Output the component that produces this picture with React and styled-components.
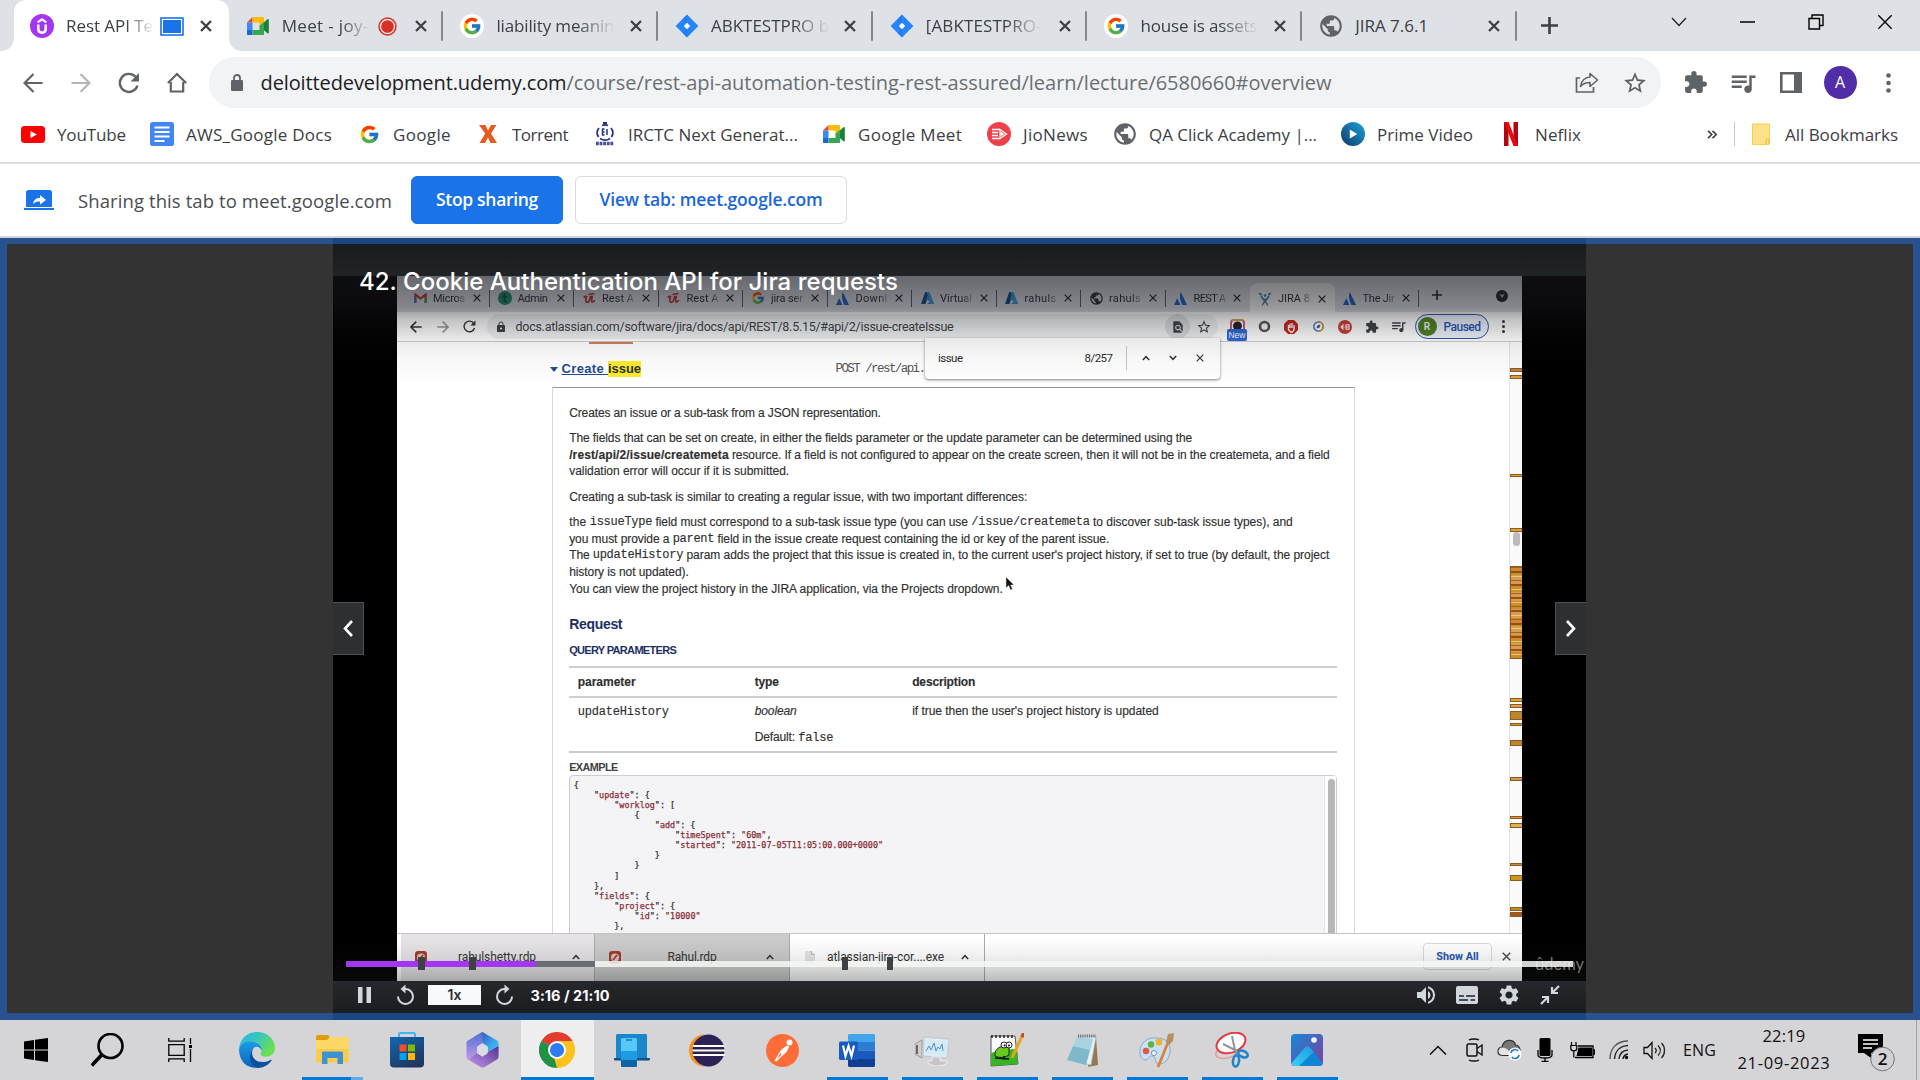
import React, { useLayoutEffect, useRef, useState } from "react";
import styled, { createGlobalStyle, css } from "styled-components";
import { FcGoogle } from "react-icons/fc";
import {
  MdPublic, MdExtension, MdQueueMusic, MdStarBorder, MdLock, MdSettings,
  MdVolumeUp, MdFindInPage,
} from "react-icons/md";

const UI = '"Open Sans", "Noto Sans", sans-serif';
const ARIAL = '"Liberation Sans", Arial, sans-serif';
const MONO = '"Liberation Mono", "Courier New", monospace';

const Global = createGlobalStyle`
  * { box-sizing: border-box; }
  body { margin: 0; overflow: hidden; background: #fff; font-family: ${UI}; color: #3c4043; }
  svg { display: block; flex: none; }
`;

/* ---------- text ---------- */
const Text = styled.span`
  display: inline-block;
  flex: none;
  white-space: pre;
  font-family: ${(p) => p.$f || "inherit"};
  font-size: ${(p) => (p.$s ? p.$s + "px" : "inherit")};
  font-weight: ${(p) => p.$b || "inherit"};
  font-style: ${(p) => (p.$i ? "italic" : "inherit")};
  color: ${(p) => p.$c || "inherit"};
  margin-left: ${(p) => p.$ml || 0}px;
`;

/* Tracks its text so that the run is exactly w pixels wide. */
function Fit({ w, children, ...rest }) {
  const ref = useRef(null);
  const [track, setTrack] = useState(0);
  useLayoutEffect(() => {
    const el = ref.current;
    el.style.letterSpacing = "0px";
    const n = el.getBoundingClientRect().width;
    const t = (w - n) / el.textContent.length;
    el.style.letterSpacing = t + "px";
    setTrack(t);
  }, [w]);
  return <Text ref={ref} {...rest} style={{ letterSpacing: track }}>{children}</Text>;
}

const Item = styled.div`
  display: flex;
  align-items: center;
  justify-content: center;
  flex: none;
  width: ${(p) => p.$w}px;
  margin-left: ${(p) => p.$ml || 0}px;
  color: ${(p) => p.$c || "inherit"};
`;

const Svg = ({ w, h, vb, children, ...r }) => (
  <svg width={w} height={h || w} viewBox={vb || `0 0 ${w} ${h || w}`} fill="none" {...r}>{children}</svg>
);

/* ---------- small icons ---------- */
const Cross = ({ s = 11, c = "#3c4043", t = 2.4 }) => (
  <Svg w={s} vb="0 0 12 12"><path d="M1 1l10 10M11 1L1 11" stroke={c} strokeWidth={t} /></Svg>
);
const Udemy = () => (
  <Svg w={24} vb="0 0 24 24">
    <circle cx="12" cy="12" r="12" fill="#a435f0" />
    <path d="M8.300 10.500v4.600c0 4.800 7.400 4.800 7.400 0v-4.600" stroke="#fff" strokeWidth="2.500" />
    <path d="M7.600 8.300l4.400-3 4.400 3" stroke="#fff" strokeWidth="2.100" />
  </Svg>
);
const Meet = ({ s = 22 }) => (
  <Svg w={s} h={s * 0.84} vb="0 0 22 18.5">
    <path d="M0 5.5L5.5 0v5.5z" fill="#ea4335" />
    <path d="M5.5 0h10c1 0 1.500.5 1.500 1.500V7l-4.500 3V5.500h-7z" fill="#fbbc04" />
    <path d="M0 5.500h5.500V13H0z" fill="#4285f4" />
    <path d="M0 13h5.500v5.500H1.500C.5 18.500 0 18 0 17z" fill="#1967d2" />
    <path d="M5.500 13h7V9l4.500 4v4c0 1-.5 1.500-1.500 1.500h-10z" fill="#34a853" />
    <path d="M12.500 9.200L20.500 2.200c.7-.5 1.300-.2 1.300.6v13c0 .8-.6 1.100-1.300.6z" fill="#188038" />
    <path d="M12.500 9.200L17 5.300v8z" fill="#34a853" />
  </Svg>
);
const Jira = () => (
  <Svg w={24} vb="0 0 24 24">
    <path d="M12 .6L23.400 12 12 23.400.6 12z" fill="#2684ff" />
    <path d="M12 .6L7.500 5.200c2.500 2.500 2.500 3 4.500 3.800L15 12l-3 3-4.500 4 4.500 4.400" fill="#1e6fe8" opacity=".45" />
    <path d="M12 8.800L15.200 12 12 15.200 8.800 12z" fill="#fff" />
  </Svg>
);
const GRound = styled.div`
  width: 24px; height: 24px; border-radius: 50%; background: #fff;
  display: flex; align-items: center; justify-content: center;
`;
const GoogleRound = () => <GRound><FcGoogle size={20} /></GRound>;

/* ---------- tab strip ---------- */
const Strip = styled.div`
  display: flex; height: 51px; background: #dee1e6; padding-left: 14px;
`;
const TabBox = styled.div`
  position: relative;
  display: flex; align-items: center; flex: none;
  width: 214.7px; height: 51px; padding: 1px 0 0 ${(p) => (p.$active ? 16 : 17)}px;
  ${(p) => p.$active && css`
    background: #fff; border-radius: 12px 12px 0 0;
    &::before, &::after {
      content: ""; position: absolute; bottom: 0; width: 12px; height: 12px;
    }
    &::before { left: -12px; background: radial-gradient(circle at 0 0, transparent 11.500px, #fff 12px); }
    &::after { right: -12px; background: radial-gradient(circle at 100% 0, transparent 11.500px, #fff 12px); }
  `}
`;
const TabTitle = styled.div`
  width: ${(p) => p.$w}px; margin-left: 12px; overflow: hidden; flex: none;
  font-size: 17px; line-height: 30px; color: #3c4043; height: 31px;
  ${(p) => p.$fade && css`mask-image: linear-gradient(90deg, #000 68%, transparent 100%);`}
`;
const TabMedia = styled.div`width: 24px; margin-left: 6px; flex: none; display: flex; justify-content: center;`;
const TabClose = styled.div`margin-left: auto; padding-right: ${(p) => (p.$sep ? 14.5 : 17)}px;`;
const TabSep = styled.div`width: 2px; height: 30px; background: #85898e; flex: none; border-radius: 1px;`;

const tabs = [
  { icon: <Udemy />, t: "Rest API Te", w: 87, media: "share", active: true, fade: true },
  { icon: <Meet />, t: "Meet - joy-", w: 87, media: "rec", sep: true, fade: true },
  { icon: <GoogleRound />, t: "liability meanin", w: 118, sep: true, fade: true },
  { icon: <Jira />, t: "ABKTESTPRO b", w: 118, sep: true, fade: true },
  { icon: <Jira />, t: "[ABKTESTPRO-", w: 116, sep: true, fade: true },
  { icon: <GoogleRound />, t: "house is assets", w: 117, sep: true, fade: true },
  { icon: <MdPublic size={26} color="#5f6368" />, t: "JIRA 7.6.1", w: 73, sep: true },
];
const Media = ({ kind }) => kind === "share" ? (
  <Svg w={24} h={19}><rect x="1" y="1" width="22" height="17" stroke="#1a73e8" strokeWidth="1.600" /><rect x="3" y="3" width="18" height="13" fill="#1a73e8" /></Svg>
) : (
  <Svg w={19}><circle cx="9.500" cy="9.500" r="8.500" stroke="#d93025" strokeWidth="1.500" /><circle cx="9.500" cy="9.500" r="6.300" fill="#d93025" /></Svg>
);
const WinButtons = styled.div`display: flex; align-items: center; height: 43px;`;

function TabStrip() {
  return (
    <Strip>
      {tabs.map((t) => (
        <TabBox key={t.t} $active={t.active}>
          <Item $w={24}>{t.icon}</Item>
          <TabTitle $w={t.w + 1} $fade={t.fade}><Fit w={t.w}>{t.t}</Fit></TabTitle>
          {t.media && <TabMedia><Media kind={t.media} /></TabMedia>}
          <TabClose $sep={t.sep}><Cross s={12} t={2.300} /></TabClose>
          {t.sep && <TabSep />}
        </TabBox>
      ))}
      <WinButtons>
        <Item $w={20} $ml={22.500}><PlusBox><Svg w={19}><path d="M9.500 1v17M1 9.500h17" stroke="#3c4043" strokeWidth="2.600" /></Svg></PlusBox></Item>
        <Item $w={20} $ml={110}><Svg w={16} h={10}><path d="M1 1l7 7.500L15 1" stroke="#222" strokeWidth="1.300" /></Svg></Item>
        <Item $w={20} $ml={48}><Svg w={15} h={2}><path d="M0 1h15" stroke="#000" strokeWidth="1.500" /></Svg></Item>
        <Item $w={20} $ml={49}><Svg w={16}><path d="M1 4.500h10.500V15H1zM4 4V1h11v10.500h-3" stroke="#000" strokeWidth="1.400" /></Svg></Item>
        <Item $w={20} $ml={49}><Cross s={16} c="#000" t={1} /></Item>
      </WinButtons>
    </Strip>
  );
}
const PlusBox = styled.div`padding-top: 8px;`;

/* ---------- address row ---------- */
const Address = styled.div`display: flex; align-items: center; height: 63px; color: #5f6368;`;
const Omnibox = styled.div`
  display: flex; align-items: center; flex: none; width: 1452px; height: 51px; margin-left: 21px;
  border-radius: 26px; background: #f1f3f4; font-size: 20px;
`;
const Avatar = styled.div`
  width: 33px; height: 33px; border-radius: 50%; background: #512da8; color: #fff;
  font-size: 16px; line-height: 33px; text-align: center;
`;
const Arrow = ({ flip, c = "#5f6368", s = 20, t = 2.200 }) => (
  <Svg w={s} vb="0 0 20 20" transform={flip ? "scale(-1 1)" : undefined}>
    <path d="M19.500 10H2M10.500 1L1.500 10l9 9" stroke={c} strokeWidth={t} />
  </Svg>
);
const Reload = ({ s = 22, c = "#5f6368" }) => (
  <Svg w={s} vb="0 0 22 22">
    <path d="M19.500 13.500A9 9 0 1 1 17.500 4.800" stroke={c} strokeWidth="2.400" />
    <path d="M21 1v8.500h-8.500z" fill={c} />
  </Svg>
);

function AddressRow() {
  return (
    <Address>
      <Item $w={22} $ml={22}><Arrow /></Item>
      <Item $w={22} $ml={26}><Arrow flip c="#b4b7ba" /></Item>
      <Item $w={24} $ml={25}><Reload /></Item>
      <Item $w={22} $ml={25}><Svg w={20} h={21}><path d="M3.800 10v9.500h12.400V10M.9 11L10 2l9.100 9" stroke="#5f6368" strokeWidth="2.200" /></Svg></Item>
      <Omnibox>
        <Item $w={16} $ml={20}><Svg w={12} h={17}><rect y="6" width="12" height="11" rx="1" fill="#5f6368" /><path d="M3 7V4c0-4 6-4 6 0v3" stroke="#5f6368" strokeWidth="1.800" /></Svg></Item>
        <Fit w={306} $ml={15.500} $c="#202124">deloittedevelopment.udemy.com</Fit>
        <Fit w={765} $c="#6b6f73">/course/rest-api-automation-testing-rest-assured/learn/lecture/6580660#overview</Fit>
        <Item $w={24} $ml={243.500}>
          <Svg w={24} h={21}>
            <path d="M5 6H1.500v14h17v-5" stroke="#5f6368" strokeWidth="1.700" />
            <path d="M15 1.500l7.500 6.500-7.500 6.500v-4c-4 0-7 1-9.500 4 .8-5 4-9 9.500-9.500z" stroke="#5f6368" strokeWidth="1.600" strokeLinejoin="round" />
          </Svg>
        </Item>
        <Item $w={26} $ml={23}><MdStarBorder size={26} /></Item>
      </Omnibox>
      <Item $w={26} $ml={21}><MdExtension size={25} /></Item>
      <Item $w={28} $ml={21}><MdQueueMusic size={30} /></Item>
      <Item $w={24} $ml={22}><Svg w={22} h={21}><path fillRule="evenodd" d="M0 0h22v21H0zM2.600 2.600v15.800h11.400V2.600z" fill="#5f6368" /></Svg></Item>
      <Item $w={34} $ml={20}><Avatar>A</Avatar></Item>
      <Item $w={6} $ml={28}><Svg w={5} h={20}><g fill="#5f6368"><circle cx="2.500" cy="2.500" r="2.300" /><circle cx="2.500" cy="10" r="2.300" /><circle cx="2.500" cy="17.500" r="2.300" /></g></Svg></Item>
    </Address>
  );
}

/* ---------- bookmarks ---------- */
const Marks = styled.div`
  display: flex; align-items: center; height: 50px; padding-bottom: 8px;
  border-bottom: 2px solid #dadce0; font-size: 17px;
`;
const VLine = styled.div`width: 1px; height: 24px; background: #c6c8cb; margin-left: ${(p) => p.$ml}px;`;
const bookmarks = [
  [21, 24, 12, 69, "YouTube", <Svg w={24} h={17}><rect width="24" height="17" rx="3.500" fill="#f00" /><path d="M9.500 5l6.500 3.500-6.500 3.500z" fill="#fff" /></Svg>],
  [24, 24, 12, 146, "AWS_Google Docs", <Svg w={24}><rect width="24" height="24" rx="2.500" fill="#4285f4" /><path d="M4.500 5.500h15M4.500 10h15M4.500 14.500h15M4.500 19h10" stroke="#fff" strokeWidth="2" /></Svg>],
  [27, 20, 14, 58, "Google", <FcGoogle size={21} />],
  [28, 18, 15, 56, "Torrent", <Svg w={18}><path d="M0 0h6.500L9 5.500 12 0h5.500L12 8.500l6 9.500h-6.500L9 12.500 6 18H.5l5.700-9.500z" fill="#e65a20" /></Svg>],
  [26, 21, 13, 170, "IRCTC Next Generat...", <Svg w={22} h={24}><path d="M4.500 15a7.500 7.500 0 0 1 .5-9M8 3.500a7.500 7.500 0 0 1 6 0M17 6a7.500 7.500 0 0 1 .5 9M6 16.500c3 2 7 2 10 0" stroke="#2b2f86" strokeWidth="1.800" /><path d="M8 7h2.500M8 10h2.500M8 13h2.500M8.500 7v6M13 7v6" stroke="#2b2f86" strokeWidth="1.500" /><path d="M9 1h4" stroke="#2b2f86" strokeWidth="2" /><path d="M2 21.500h18" stroke="#2b2f86" strokeWidth="3.400" strokeDasharray="2.800 .8" opacity=".85" /></Svg>],
  [25, 22, 13, 104, "Google Meet", <Meet />],
  [25, 24, 12, 65, "JioNews", <Svg w={24}><circle cx="12" cy="12" r="12" fill="#f0404a" /><path d="M5 7.500h8M5 10.500h6M5 13.500h6M5 16.500h8" stroke="#fff" strokeWidth="1.700" /><path d="M13 7.500l6.500 4.500-6.500 4.500z" stroke="#fff" strokeWidth="1.200" fill="#f0404a" /><path d="M13.500 9.500l4 2.500-4 2.500z" fill="#fff" /></Svg>],
  [25, 24, 12, 168, "QA Click Academy |...", <MdPublic size={26} color="#5f6368" />],
  [24, 24, 12, 96, "Prime Video", <Svg w={24}><defs><linearGradient id="pv" x1="1" y1="0" x2="0" y2="1"><stop stopColor="#1fa4dc" /><stop offset="1" stopColor="#0b3766" /></linearGradient></defs><circle cx="12" cy="12" r="12" fill="url(#pv)" /><path d="M8.800 7.500l7.500 4.500-7.500 4.500z" fill="#fff" /></Svg>],
  [31, 14, 17, 46, "Neflix", <Svg w={14} h={24}><path d="M0 0h4.500v24H0zM9.500 0H14v24H9.500z" fill="#b1060f" /><path d="M0 0h4.500L14 24H9.500z" fill="#e50914" /></Svg>],
];
function BookmarkRow() {
  return (
    <Marks>
      {bookmarks.map(([ml, iw, gap, tw, label, icon]) => (
        <React.Fragment key={label}>
          <Item $w={iw} $ml={ml}>{icon}</Item>
          <Fit w={tw} $ml={gap}>{label}</Fit>
        </React.Fragment>
      ))}
      <Item $w={10} $ml={126}><Svg w={10} h={9}><path d="M1 .8l3.700 3.700L1 8.200M5.500.8l3.700 3.700-3.700 3.700" stroke="#444" strokeWidth="1.700" /></Svg></Item>
      <VLine $ml={17} />
      <Item $w={18} $ml={17}><Svg w={18} h={22}><path d="M.5 1h17v15l-.5 5.500H.5z" fill="#fee189" stroke="#f7cf53" /><path d="M14 21.500v-4c0-2 3-2 3 0v3.500" stroke="#e9b92f" /></Svg></Item>
      <Fit w={113} $ml={15}>All Bookmarks</Fit>
    </Marks>
  );
}

/* ---------- sharing bar ---------- */
const ShareBar = styled.div`
  display: flex; align-items: center; height: 74px; padding: 0 0 0 24px; border-bottom: 2px solid #d0d4da;
`;
const Button = styled.div`
  display: flex; align-items: center; justify-content: center; flex: none;
  height: 48px; width: ${(p) => p.$w}px; margin-left: ${(p) => p.$ml}px; padding-bottom: 2px;
  border-radius: 6px; font-weight: 600; font-size: 17.500px;
  background: ${(p) => (p.$primary ? "#1a73e8" : "#fff")};
  color: ${(p) => (p.$primary ? "#fff" : "#1a66dc")};
  border: 1px solid ${(p) => (p.$primary ? "#1a73e8" : "#dadce0")};
`;
function SharingRow() {
  return (
    <ShareBar>
      <Svg w={30} h={20}>
        <path d="M2 2.500C2 1 3 0 4.500 0h21C27 0 28 1 28 2.500V17H2zM0 18h30v2H0z" fill="#1a73e8" />
        <path d="M9 14c.5-4 3-6 7-6.300V5l6 5-6 4.500v-3c-3 0-5 .5-7 2.500z" fill="#fff" />
      </Svg>
      <Fit w={314} $ml={24} $s={18.500} $c="#4a4d51">Sharing this tab to meet.google.com</Fit>
      <Button $primary $w={152} $ml={19}><Fit w={102}>Stop sharing</Fit></Button>
      <Button $w={272} $ml={12}><Fit w={223}>View tab: meet.google.com</Fit></Button>
    </ShareBar>
  );
}

/* ---------- video ---------- */
const Stage = styled.div`display: flex; height: 782px;`;
const Side = styled.div`
  background: #333; border: solid #27528f; border-width: 6px 0 7px;
  ${(p) => (p.$left ? "width: 333px; border-left-width: 7px;" : "flex: 1; border-right-width: 7px;")}
`;
const Video = styled.div`
  position: relative; width: 1253px; background: #000;
  border: solid #1a4682; border-width: 6px 0 7px; font-family: ${ARIAL};
  display: flex; flex-direction: column;
`;
const TopShade = styled.div`height: 32px; flex: none; background: linear-gradient(#191b1f, #212427);`;
const Screen = styled.div`
  width: 1124.500px; height: 705px; margin-left: 64px; background: #fff;
  display: flex; flex-direction: column; overflow: hidden; flex: none;
`;
const ShadeDown = styled.div`
  position: absolute; left: 0; right: 0; top: 32px; height: 110px;
  background: linear-gradient(rgba(22,23,28,.6) 0, rgba(22,23,28,.44) 32px, rgba(22,23,28,.26) 44px, rgba(22,23,28,.09) 64px, rgba(22,23,28,.03) 84px, transparent);
`;
const ShadeUp = styled.div`
  position: absolute; left: 0; right: 0; top: 695px; height: 42px;
  background: linear-gradient(transparent, rgba(28,29,31,.08) 45%, rgba(28,29,31,.3));
`;
const Title = styled.div`
  position: absolute; left: 26px; top: 21px; color: #fff; font: 500 24px/34px Inter, ${ARIAL};
`;

const ITabs = styled.div`display: flex; height: 36px; background: #dee1e6; padding-left: 8px; flex: none; color: #2c2e31;`;
const ITab = styled.div`
  display: flex; align-items: center; width: 84.500px; flex: none; height: 28px; margin-top: 7px; font-size: 11px;
  padding-left: 8px; font-family: Roboto, sans-serif; padding-top: 2px;
  ${(p) => p.$active && "background: #fff; border-radius: 8px 8px 0 0; height: 29px;"}
`;
const IClip = styled.div`
  width: 34px; overflow: hidden; margin-left: 6px; flex: none;
  ${(p) => !p.$full && "mask-image: linear-gradient(90deg, #000 66%, rgba(0,0,0,.15) 100%);"}
`;
const ISep = styled.div`width: 1px; height: 17px; background: #55585c; margin-left: auto;`;
const Gmail = <Svg w={13} h={10}><path d="M1.300 10V1.500l5.200 4 5.200-4V10" stroke="#c5372c" strokeWidth="2.200" /><path d="M1.300 10V4" stroke="#3b6fd0" strokeWidth="2.200" /><path d="M11.700 10V4" stroke="#2f9e50" strokeWidth="2.200" /></Svg>;
const Teal = <Svg w={14}><circle cx="7" cy="7" r="7" fill="#1b8a6b" /><path d="M6.500 3v6.500c0 1.200 1 1.500 2.500 1M4.500 5.500h4.500" stroke="#143" strokeWidth="1.300" /></Svg>;
const RedU = <Svg w={13} h={12}><path d="M.8 5.500c.8-1.200 1.500-1.200 2.700-1-.8 2.800-1.200 5.500.4 5.800 1.800.3 3-2 3.600-5.600h1.700c-.6 3-1 5.300.3 5.300 1 0 1.600-.7 2.300-1.700" stroke="#b8342c" strokeWidth="1.700" /><path d="M5.500 2.500l6-1" stroke="#b8342c" strokeWidth="1.300" /></Svg>;
const Atl = <Svg w={13} h={13}><path d="M3.200 6.200L6.500 13H0zM6.800 0L13 13H8.500C6.500 9 5 5 6.800 0z" fill="#1c5fd0" /></Svg>;
const Azure = <Svg w={13} h={12}><path d="M4.200 0h4L4.500 12H0z" fill="#114a8b" /><path d="M8.200 0L13 12H6L9 9.500 5 7z" fill="#2f90d8" /><path d="M5.500 0h3L13 12h-3z" fill="#3aa0e0" /></Svg>;
const JiraOld = <Svg w={14}><path d="M1 1c1 1 2 1.500 3 1.200M13 1c-1 1-2 1.500-3 1.200" stroke="#3d7ea6" strokeWidth="1.500" /><path d="M3 3.500c1 3.500 3 4 4 4s3-.5 4-4M4.500 13.500c0-4 5.500-5 6-9.500M9.500 13.500c0-4-5.500-5-6-9.500" stroke="#3d7ea6" strokeWidth="1.400" /><circle cx="7" cy="3.500" r="1.300" fill="#3d7ea6" /></Svg>;
const itabs = [
  [Gmail, "Micros"], [Teal, "Admin", 1], [RedU, "Rest A"], [RedU, "Rest A"], [<FcGoogle size={14} />, "jira ser"],
  [Atl, "Downl"], [Azure, "Virtual"], [Azure, "rahuls"], [<MdPublic size={15} />, "rahuls"], [Atl, "REST A"], [JiraOld, "JIRA 8"], [Atl, "The Jir"],
];

const IBar = styled.div`
  display: flex; align-items: center; height: 30px; background: #fff; border-bottom: 1px solid #ccc; flex: none; color: #3c4043;
`;
const IOmni = styled.div`
  display: flex; align-items: center; width: 731px; height: 25px; border-radius: 13px; background: #eef0f2;
  margin-left: 11px; font-family: Roboto, sans-serif; font-size: 12.500px; flex: none;
`;
const IRound = styled.div`
  width: 25px; height: 25px; border-radius: 50%; background: #d8dadd; display: flex; align-items: center; justify-content: center; margin-left: 211.500px;
`;
const Paused = styled.div`
  display: flex; align-items: center; height: 25px; width: 74px; border-radius: 13px; border: 1.500px solid #2f55a8;
  background: #eef3fc; color: #2754b0; font: 500 12px Roboto, sans-serif; margin-left: 3px; flex: none;
`;
const RBadge = styled.div`
  width: 19px; height: 19px; border-radius: 50%; background: #4e8025; color: #fff; text-align: center; line-height: 19px; font-size: 10px; margin-left: 2px;
`;
const NewIcon = styled.div`
  width: 20px; height: 22px; display: flex; flex-direction: column; align-items: center; margin-top: 6px;
  span { width: 20px; height: 12px; border-radius: 2px; background: #2b67d8; color: #fff; font-size: 8.500px; line-height: 12px; text-align: center; }
`;

const Page = styled.div`position: relative; display: flex; height: 591px; background: #fff; flex: none; padding-left: 152.500px;`;
const Doc = styled.div`width: 805px; display: flex; flex-direction: column; height: 591px;`;
const Head = styled.div`display: flex; align-items: center; height: 45px; padding-top: 9px; font-size: 13px; flex: none;`;
const PrevLine = styled.div`position: absolute; left: 192px; top: 0; width: 44px; height: 2px; background: #cf7f5c;`;
const Link = styled.div`
  display: flex; font-weight: 700; color: #1f4b94; margin-left: 4px; line-height: 16px; text-decoration: underline;
  mark { background: #ffeb2d; color: #2a3320; text-decoration: underline; }
`;
const Box = styled.div`
  margin-left: 2px; flex: 1; border: 1px solid #d8d8d8; border-top: 1.500px solid #999; border-bottom: 0; min-height: 0;
  padding: 16.800px 16.300px 0 16.700px; font-size: 12px; color: #303030; overflow: hidden; -webkit-text-stroke: .15px #303030;
`;
const P = styled.div`margin-bottom: 8.600px;`;
const Line = styled.div`display: flex; height: 16.700px; line-height: 16.700px; white-space: pre;`;
const H = styled.div`
  font-weight: 700; color: ${(p) => p.$c || "#1c2f63"}; height: ${(p) => p.$h}px; line-height: ${(p) => p.$h}px;
  margin-top: ${(p) => p.$mt}px; font-size: ${(p) => p.$s}px; -webkit-text-stroke: 0;
`;
const Table = styled.div`margin-top: 9px; border-top: 2px solid #cfcfcf; border-bottom: 2px solid #cbcbcb;`;
const Tr = styled.div`
  display: grid; grid-template-columns: 177px 157.500px 1fr; padding-left: 8.500px; height: ${(p) => p.$h}px; line-height: 28px;
  ${(p) => p.$head && "border-bottom: 2px solid #cfcfcf; font-weight: 700;"}
`;
const Td = styled.div`display: flex; flex-direction: column; line-height: 25.500px; padding-top: 1.500px;`;
const Code = styled.div`
  display: flex; margin-top: 1.500px; height: 170px; border: 1.500px solid #ccc; border-radius: 4px; background: #f4f4f6;
  font-family: "DejaVu Sans Mono", monospace; font-size: 8.430px;
`;
const Pre = styled.div`
  flex: 1; padding: 3.500px 0 0 3.500px; white-space: pre; line-height: 10.070px; color: #333;
  -webkit-text-stroke: .25px #333;
  b { font-weight: 400; color: #8a2f37; -webkit-text-stroke: .25px #8a2f37; }
`;
const CodeTrack = styled.div`width: 12px; background: #fcfcfc; border-left: 1px solid #e6e6e6; padding: 3px 0 0 3px;`;
const CodeThumb = styled.div`width: 7px; height: 170px; border-radius: 4px; background: #b7b7b7;`;

const Track = styled.div`position: relative; width: 13px; margin-left: auto; background: #fafafa; border-left: 1px solid #e2e2e2;`;
const Mark = styled.div`
  position: absolute; left: 0; right: 0; top: ${(p) => p.$y - 342}px; height: ${(p) => p.$h}px;
  background: ${(p) => p.$c}; border: solid #8f5a22; border-width: 1px 0 1px 1px;
`;
const Dense = styled(Mark)`
  background:
    repeating-linear-gradient(rgba(150,80,10,.75) 0 1px, transparent 1px 4px, rgba(140,60,10,.8) 4px 6px, transparent 6px 9px, rgba(245,210,130,.8) 9px 10px, transparent 10px 13px),
    repeating-linear-gradient(#d08a2c 0 5px, #bd942a 5px 8px, #d69d50 8px 17px);
`;
const Thumb = styled.div`position: absolute; left: 3px; top: 190px; width: 7px; height: 14px; border-radius: 4px; background: #bbb;`;

const Find = styled.div`
  position: absolute; left: 592px; top: 94px; width: 295px; height: 41px; background: #fff; border-radius: 0 0 4px 4px;
  box-shadow: 0 1px 3px rgba(0,0,0,.5); display: flex; align-items: center; font: 11.500px Roboto, sans-serif; color: #2c2c2c; padding: 0 0 1px 13px;
`;
const Chev = ({ down, s = 8, c = "#333", t = 1.500 }) => (
  <Svg w={s} h={6} vb="0 0 8 6"><path d={down ? "M.8 1L4 4.300 7.200 1" : "M.8 5L4 1.700 7.200 5"} stroke={c} strokeWidth={t} /></Svg>
);

const Downloads = styled.div`
  display: flex; height: 48px; border-top: 1.500px solid #c4c4c4; padding-left: 4px; background: #fff; font: 12px Roboto, sans-serif; color: #333; flex: none;
`;
const Dl = styled.div`
  display: flex; align-items: center; width: ${(p) => p.$w}px; background: ${(p) => p.$bg}; border-right: 1px solid #aaa; flex: none; padding-bottom: 1px;
`;
const ShowAll = styled.div`
  width: 69px; height: 27px; margin: 8.500px 0 0 438px; border: 1px solid #d8dae0; border-radius: 4px; color: #2354b4;
  font: 700 10.800px/25px Roboto, sans-serif; text-align: center;
`;
const DlClose = styled.div`margin: 17.500px 0 0 10px;`;

const Nav = styled.div`
  position: absolute; top: 358px; width: 31px; height: 53px; background: #2d2f31; border: 1px solid #4b5158;
  display: flex; align-items: center; justify-content: center;
  ${(p) => (p.$right ? "right: 0; border-right: 0;" : "left: 0; border-left: 0;")}
`;
const Progress = styled.div`
  position: absolute; left: 13px; top: 717px; width: 1227px; height: 6px; display: flex; background: rgba(246,248,246,.85);
`;
const Part = styled.div`width: ${(p) => p.$w}px; background: ${(p) => p.$c};`;
const Tick = styled.div`position: absolute; top: -4px; left: ${(p) => p.$x}px; width: 6.500px; height: 13px; background: #3e4143;`;
const Water = styled.div`position: absolute; left: 1202px; top: 710px; color: #777; font: 16.500px Lato, sans-serif;`;
const Controls = styled.div`
  display: flex; align-items: center; height: 32px; background: linear-gradient(#26282c, #1a1c20); color: #d1d7dc; padding-bottom: 4px; flex: none;
`;
const Speed = styled.div`
  width: 53px; height: 20px; margin-left: 13px; background: #f7f9fa; color: #2d2f31; font: 600 14px/20px Inter, ${ARIAL}; text-align: center;
`;
const Turn = ({ flip }) => (
  <Svg w={19} h={22} transform={flip ? "scale(-1 1)" : undefined}>
    <path d="M2 12.500A7.500 7.500 0 1 0 9.500 5H7" stroke="#d1d7dc" strokeWidth="2" />
    <path d="M9.500.5L4.500 5l5 4.500z" fill="#d1d7dc" />
  </Svg>
);

const codeLines = [
  [0, "", "{"], [4, "update", ": {"], [8, "worklog", ": ["], [12, "", "{"], [16, "add", ": {"],
  [20, "timeSpent", ": ", "60m", ","], [20, "started", ": ", "2011-07-05T11:05:00.000+0000"],
  [16, "", "}"], [12, "", "}"], [8, "", "]"], [4, "", "},"], [4, "fields", ": {"], [8, "project", ": {"],
  [12, "id", ": ", "10000"], [8, "", "},"],
];
const marks = [
  [368, 4, "#bd843c"], [375, 4, "#dd9c3a"], [474, 3, "#d9a52a"], [528, 4, "#d9a52a"], [698, 4, "#d9a52a"], [704, 4, "#e0a050"],
  [711, 9, "#bb862c"], [723, 3, "#d0a020"], [740, 6, "#bb862c"], [777, 4, "#c99a50"], [816, 3, "#e8902a"],
  [823, 5, "#e0b050"], [863, 3, "#c09040"], [875, 6, "#c9981c"], [907, 4, "#b8901c"], [912, 5, "#a85a14"],
];

function RdpIcon() {
  return <Svg w={12} h={13}><rect width="12" height="13" rx="3" fill="#a03b2a" /><circle cx="6" cy="6.500" r="4" fill="#d9c4c0" /><path d="M4 9l4-5" stroke="#a03b2a" strokeWidth="1.800" /></Svg>;
}

function InnerBrowser() {
  return (
    <Screen>
      <ITabs>
        {itabs.map(([icon, t, full], i) => (
          <ITab key={i} $active={i === 10}>
            <Item $w={14}>{icon}</Item>
            <IClip $full={full}><Fit w={full ? 30 : 32}>{t}</Fit></IClip>
            <Item $w={10} $ml={4.500}><Cross s={8} c="#222" t={1.900} /></Item>
            {i !== 10 && i !== 9 && <ISep />}
          </ITab>
        ))}
        <Item $w={12} $ml={12}><Svg w={10} h={14}><path d="M5 3v10M0 8h10" stroke="#222" strokeWidth="1.600" /></Svg></Item>
        <Item $w={12} $ml={53}><Svg w={12} h={15}><circle cx="6" cy="9" r="6" fill="#222" /><path d="M3.500 7.500h5L6 11z" fill="#aaa" /></Svg></Item>
      </ITabs>
      <IBar>
        <Item $w={12} $ml={13}><Arrow s={12} c="#333" t={2.600} /></Item>
        <Item $w={12} $ml={14.500}><Arrow s={12} c="#999" flip t={2.600} /></Item>
        <Item $w={13} $ml={14.500}><Reload s={13} c="#333" /></Item>
        <IOmni>
          <Item $w={10} $ml={9}><MdLock size={12} /></Item>
          <Fit w={438} $ml={9.500}>docs.atlassian.com/software/jira/docs/api/REST/8.5.15/#api/2/issue-createIssue</Fit>
          <IRound><MdFindInPage size={14} /></IRound>
          <Item $w={16} $ml={6}><MdStarBorder size={16} /></Item>
        </IOmni>
        <Item $w={20} $ml={9}><NewIcon><Svg w={15} h={10}><path d="M1 10V4c0-2 1-3 3-3h7c2 0 3 1 3 3v6" stroke="#d0587c" strokeWidth="2" /><path d="M2 1h11" stroke="#d09a4c" strokeWidth="2" /><circle cx="7.500" cy="7" r="4.500" fill="#222" /></Svg><span>New</span></NewIcon></Item>
        <Item $w={14} $ml={10}><Svg w={13}><circle cx="6.500" cy="6.500" r="4.500" stroke="#555" strokeWidth="2.600" /></Svg></Item>
        <Item $w={14} $ml={13}><Svg w={14}><path d="M4 0h6l4 4v6l-4 4H4l-4-4V4z" fill="#c6251b" /><path d="M4.500 7v2.500L6.500 12h2l1.500-2.500V5M6 8V3.500M8 8V3M4.500 5v3" stroke="#fff" strokeWidth="1.400" /></Svg></Item>
        <Item $w={12} $ml={14}><Svg w={11}><circle cx="5.500" cy="5.500" r="4.700" stroke="#4c68a8" strokeWidth="1.300" /><path d="M5.500.8a4.700 4.700 0 0 1 0 9.400" stroke="#d89a2c" strokeWidth="1.300" /><path d="M3.500 7.500l1-3 3-1-1 3z" fill="#2f4f98" /></Svg></Item>
        <Item $w={14} $ml={14}><Svg w={14}><circle cx="7" cy="7" r="7" fill="#cf3b33" /><path d="M5.500 4.500L3 7l2.500 2.500M3 7h3.500M8 4.800h3v4.400H8zM8 7h3" stroke="#fff" strokeWidth="1.100" /></Svg></Item>
        <Item $w={14} $ml={13}><MdExtension size={14} /></Item>
        <Item $w={16} $ml={11}><MdQueueMusic size={17} /></Item>
        <Item $w={5.500} />
        <Paused><RBadge>R</RBadge><Fit w={37} $ml={7}>Paused</Fit></Paused>
        <Item $w={4} $ml={13}><Svg w={3} h={13}><g fill="#333"><circle cx="1.500" cy="1.500" r="1.500" /><circle cx="1.500" cy="6.500" r="1.500" /><circle cx="1.500" cy="11.500" r="1.500" /></g></Svg></Item>
      </IBar>
      <Page>
        <PrevLine />
        <Doc>
          <Head>
            <Svg w={8} h={5}><path d="M0 0h8L4 5z" fill="#1f4b94" /></Svg>
            <Link><Fit w={46.500}>Create </Fit><mark><Fit w={33}>issue</Fit></mark></Link>
            <Fit w={89} $ml={194.500} $f={MONO} $s={12.500} $c="#555">POST /rest/api.</Fit>
          </Head>
          <Box>
            <P><Line><Fit w={311.500}>Creates an issue or a sub-task from a JSON representation.</Fit></Line></P>
            <P>
              <Line><Fit w={623}>The fields that can be set on create, in either the fields parameter or the update parameter can be determined using the</Fit></Line>
              <Line><Fit w={159.500} $b={700}>/rest/api/2/issue/createmeta</Fit><Fit w={601}> resource. If a field is not configured to appear on the create screen, then it will not be in the createmeta, and a field</Fit></Line>
              <Line><Fit w={220}>validation error will occur if it is submitted.</Fit></Line>
            </P>
            <P><Line><Fit w={458}>Creating a sub-task is similar to creating a regular issue, with two important differences:</Fit></Line></P>
            <Line>
              <Fit w={20.500}>the </Fit><Fit w={62.500} $f={MONO}>issueType</Fit>
              <Fit w={319}> field must correspond to a sub-task issue type (you can use </Fit>
              <Fit w={118.500} $f={MONO}>/issue/createmeta</Fit><Fit w={203}> to discover sub-task issue types), and</Fit>
            </Line>
            <Line><Fit w={103.500}>you must provide a </Fit><Fit w={41.500} $f={MONO}>parent</Fit><Fit w={395}> field in the issue create request containing the id or key of the parent issue.</Fit></Line>
            <Line><Fit w={23.500}>The </Fit><Fit w={90.500} $f={MONO}>updateHistory</Fit><Fit w={646}> param adds the project that this issue is created in, to the current user's project history, if set to true (by default, the project</Fit></Line>
            <Line><Fit w={119.500}>history is not updated).</Fit></Line>
            <Line><Fit w={433.500}>You can view the project history in the JIRA application, via the Projects dropdown.</Fit></Line>
            <H $h={18} $mt={18} $s={14}><Fit w={53}>Request</Fit></H>
            <H $h={14} $mt={10} $s={11}><Fit w={107}>QUERY PARAMETERS</Fit></H>
            <Table>
              <Tr $head $h={29.500}><div><Fit w={58}>parameter</Fit></div><div><Fit w={24}>type</Fit></div><div><Fit w={63}>description</Fit></div></Tr>
              <Tr $h={53}>
                <Td><div><Fit w={91} $f={MONO}>updateHistory</Fit></div></Td>
                <Td><div><Fit w={42} $i>boolean</Fit></div><div><Fit w={43.500}>Default: </Fit><Fit w={35} $f={MONO}>false</Fit></div></Td>
                <Td><div><Fit w={246.500}>if true then the user's project history is updated</Fit></div></Td>
              </Tr>
            </Table>
            <H $h={14} $mt={7} $s={10.800} $c="#404040"><Fit w={48.500}>EXAMPLE</Fit></H>
            <Code>
              <Pre>
                {codeLines.map(([ind, k, after, v, end], i) => (
                  <div key={i}>
                    {" ".repeat(ind)}{k && <>"<b>{k}</b>"</>}{after}{v && <b>"{v}"</b>}{end}
                  </div>
                ))}
              </Pre>
              <CodeTrack><CodeThumb /></CodeTrack>
            </Code>
          </Box>
        </Doc>
        <Track>
          {marks.map(([y, h, c]) => <Mark key={y} $y={y} $h={h} $c={c} />)}
          <Dense $y={566} $h={93} />
          <Thumb />
        </Track>
      </Page>
      <Downloads>
        <Dl $w={193.500} $bg="#e5e3e5"><Item $w={12} $ml={14}><RdpIcon /></Item><Fit w={78} $ml={31}>rahulshetty.rdp</Fit><Item $w={8} $ml={36}><Chev /></Item></Dl>
        <Dl $w={195} $bg="#cbcbcb"><Item $w={12} $ml={14}><RdpIcon /></Item><Fit w={49} $ml={47}>Rahul.rdp</Fit><Item $w={8} $ml={49}><Chev /></Item></Dl>
        <Dl $w={195.500} $bg="#fff"><Item $w={12} $ml={14}><Svg w={10} h={13}><path d="M0 0h6.500L10 3.500V13H0z" fill="#e4e4e4" /><path d="M6.500 0v3.500H10" stroke="#bbb" /></Svg></Item><Fit w={117} $ml={11.500}>atlassian-jira-cor....exe</Fit><Item $w={8} $ml={17}><Chev /></Item></Dl>
        <ShowAll>Show All</ShowAll>
        <DlClose><Cross s={9} c="#444" t={1.800} /></DlClose>
      </Downloads>
    </Screen>
  );
}

const Cursor = styled.div`position: absolute; left: 672px; top: 332px;`;

function Player() {
  return (
    <Stage>
      <Side $left />
      <Video>
        <TopShade />
        <InnerBrowser />
        <Controls>
          <Item $w={14} $ml={24.500}><Svg w={13} h={16}><path d="M0 0h4.500v16H0zM8.500 0H13v16H8.500z" fill="#d1d7dc" /></Svg></Item>
          <Item $w={19} $ml={24.500}><Turn /></Item>
          <Speed>1x</Speed>
          <Item $w={19} $ml={13.500}><Turn flip /></Item>
          <Fit w={79} $ml={17} $s={14.500} $b={700} $c="#fff" $f="Inter, sans-serif">3:16 / 21:10</Fit>
          <Item $w={22} $ml={805.500}><MdVolumeUp size={24} /></Item>
          <Item $w={22} $ml={19}><Svg w={22} h={18}><rect width="22" height="18" rx="2" fill="#d1d7dc" /><path d="M3 10h5M10 10h9M3 14h9M14.500 14h4.500" stroke="#1f2225" strokeWidth="1.700" /></Svg></Item>
          <Item $w={24} $ml={19}><MdSettings size={24} /></Item>
          <Item $w={20} $ml={19}><Svg w={20}><path d="M19 1l-6 6M12 2v6h6M1 19l6-6M8 18v-6H2" stroke="#d1d7dc" strokeWidth="2.200" /></Svg></Item>
        </Controls>
        <Find>
          <Fit w={24.500}>issue</Fit><Fit w={28} $ml={122}>8/257</Fit><VLine $ml={13.500} />
          <Item $w={10} $ml={14}><Chev /></Item><Item $w={10} $ml={17}><Chev down /></Item><Item $w={10} $ml={17}><Cross s={8} t={1.800} c="#333" /></Item>
        </Find>
        <Cursor><Svg w={11} h={16}><path d="M1 1v11l2.700-2.400L5.500 14l2-.8-1.800-4.200H9z" fill="#111" stroke="#ddd" strokeWidth=".6" /></Svg></Cursor>
        <ShadeDown />
        <ShadeUp />
        <Water>ûdemy</Water>
        <Title><Fit w={539}>42. Cookie Authentication API for Jira requests</Fit></Title>
        <Nav><Svg w={10} h={17}><path d="M9 1L2 8.500 9 16" stroke="#fff" strokeWidth="2.600" /></Svg></Nav>
        <Nav $right><Svg w={10} h={17}><path d="M1 1l7 7.500L1 16" stroke="#fff" strokeWidth="2.600" /></Svg></Nav>
        <Progress>
          <Part $w={190} $c="#a435f0" /><Part $w={59} $c="#6a6f73" />
          {[72, 123, 495.500, 540.500].map((x) => <Tick key={x} $x={x} />)}
        </Progress>
      </Video>
      <Side />
    </Stage>
  );
}

/* ---------- taskbar ---------- */
const Bar = styled.div`display: flex; height: 60px; background: #d5d4d6; color: #111;`;
const TaskApp = styled.div`
  display: flex; flex-direction: column; align-items: center; justify-content: center; position: relative;
  width: ${(p) => p.$w || 75}px; height: 60px; flex: none; background: ${(p) => (p.$on ? "#efeeef" : "none")};
  background-clip: content-box; padding: 0 1px;
  &::after {
    content: ""; position: absolute; bottom: 0; height: 3px; left: ${(p) => (p.$on ? 1 : 7)}px; right: ${(p) => (p.$on ? 1 : 7)}px;
    background: ${(p) => (p.$multi ? "linear-gradient(90deg, #0078d7 80%, #62aae6 80%)" : "#0078d7")};
    display: ${(p) => (p.$run || p.$on ? "block" : "none")};
  }
`;
const Apps = styled.div`display: flex; padding-left: 3.500px;`;
const Clock = styled.div`
  display: flex; flex-direction: column; align-items: center; justify-content: center; width: 94px; margin-left: 21px;
  font-size: 16.500px; line-height: 26.500px; padding-bottom: 1px;
`;
const Corner = styled.div`width: 1px; background: #a4a4a4; margin-left: 20px;`;

const appIcons = {
  edge: <Svg w={36} vb="0 0 48 48"><defs><linearGradient id="e1" x1="0" y1="0" x2="1" y2=".5"><stop stopColor="#2fb7e8" /><stop offset=".5" stopColor="#35c6bd" /><stop offset="1" stopColor="#6be04f" /></linearGradient><linearGradient id="e2" x1="0" y1="0" x2="0" y2="1"><stop stopColor="#1b9de2" /><stop offset="1" stopColor="#0a62c0" /></linearGradient></defs>
    <path d="M0 23C1 8 12 0 24 0c14 0 24 10 24 21 0 8-6 12-12 12-5 0-8-2-7-5 3-5 0-14-9-15C11 12 3 17 0 23z" fill="url(#e1)" />
    <path d="M0 23c3-8 11-12 19-10 8 1 12 7 11 12-2-6-8-7-11-3-6 8 0 22 14 23-14 7-33 0-33-22z" fill="url(#e2)" />
    <path d="M19 22c-5 9 2 19 14 18 5 0 8-3 11-3-4 7-12 11-19 11-9-2-15-14-6-26z" fill="#0f4f9d" /></Svg>,
  files: <Svg w={34} h={30} vb="0 0 34 30"><path d="M1 1.500C1 .7 1.500 0 2.500 0H13l3 4-3 3H1z" fill="#dd9c0c" /><path d="M1 5h11l3-3h17c1 0 1.500.6 1.500 1.500V26H1z" fill="#fed867" /><path d="M1 14h32.500v12c0 1-.6 1.500-1.500 1.500H2.500C1.500 27.500 1 27 1 26z" fill="#fccb4c" /><path d="M7 29V18c0-1 .7-1.500 1.500-1.500h18c.9 0 1.500.6 1.500 1.500v11h-5.500v-6h-10v6z" fill="#3d92d4" /></Svg>,
  store: <Svg w={36} vb="0 0 36 36"><defs><linearGradient id="st" x1="0" y1="0" x2=".6" y2="1"><stop stopColor="#1068b5" /><stop offset="1" stopColor="#21365f" /></linearGradient></defs><path d="M10 7V2.500C10 1.300 10.500 1 11.500 1h13c1 0 1.500.3 1.500 1.500V7" stroke="#3fb6ee" strokeWidth="2" /><path d="M1 5h34v27c0 2-1.500 3.500-3.500 3.500h-27C2.500 35.500 1 34 1 32z" fill="url(#st)" /><path d="M10.500 12.500h7v7h-7z" fill="#f25022" /><path d="M19 12.500h7v7h-7z" fill="#7fba00" /><path d="M10.500 21h7v7h-7z" fill="#00a4ef" /><path d="M19 21h7v7h-7z" fill="#ffb900" /></Svg>,
  m365: <Svg w={33} h={36} vb="0 0 33 36"><defs><linearGradient id="m1" x1="0" y1="0" x2="1" y2="1"><stop stopColor="#2b3fa8" /><stop offset=".6" stopColor="#3aa6ee" /><stop offset="1" stopColor="#59d4f4" /></linearGradient><linearGradient id="m2" x1="0" y1="0" x2="0" y2="1"><stop stopColor="#4b70d2" /><stop offset="1" stopColor="#c298ec" /></linearGradient><linearGradient id="m3" x1="0" y1="1" x2="1" y2="0"><stop stopColor="#c69bee" /><stop offset="1" stopColor="#55318f" /></linearGradient></defs>
    <path d="M16.500 0L31 8.500c1 .7 1.500 1.500 1.500 3V25L22 19.500V15l-5.500-4L8 5z" fill="url(#m1)" /><path d="M16.500 0L2 8.500C1 9.200.5 10 .5 11.500v13c0 1.500.5 2.500 1.500 3l9-6.500v-6l5.500-4z" fill="url(#m2)" /><path d="M2 27.500L14.500 35c1.500.8 2.500.8 4 0L31 27.500c1-.7 1.500-1.700 1.500-3V14L22 20l-5.500 4.500L11 21z" fill="url(#m3)" /><path d="M16.500 11.500l5 3v7l-5 3-5-3v-7z" fill="#dcdae2" /></Svg>,
  chrome: <Svg w={36} vb="0 0 48 48"><path d="M24 24L3.200 12A24 24 0 0 1 44.800 12z" fill="#e33b2e" /><path d="M24 24L44.800 12A24 24 0 0 1 24 48z" fill="#fcc31e" /><path d="M24 24l7 10-7 14A24 24 0 0 1 3.200 12z" fill="#1f9247" /><path d="M24 12h20.800L34 26z" fill="#fcc31e" /><path d="M34.300 30L24 48l-4-14z" fill="#fcc31e" /><path d="M3.200 12l10.400 18L24 35l-6-14z" fill="#1f9247" /><circle cx="24" cy="24" r="12" fill="#fff" /><circle cx="24" cy="24" r="9.500" fill="#2f7cf2" /></Svg>,
  phone: <Svg w={36} h={33} vb="0 0 36 33"><path d="M2 1.500C2 .7 2.700 0 3.500 0h28c.9 0 1.500.7 1.500 1.500V25H2z" fill="#1a87cc" /><path d="M0 24h36v1c0 .9-.6 1.500-1.500 1.500h-33C.6 26.500 0 26 0 25z" fill="#0c5486" /><rect x="7" y="4" width="16" height="29" rx="1.500" fill="#1f9be0" /><path d="M7 5.500C7 4.700 7.700 4 8.500 4h13c.9 0 1.500.7 1.500 1.500V17H7z" fill="#56c8f8" /><path d="M7 26h16v5.500c0 .9-.6 1.500-1.500 1.500h-13c-.8 0-1.500-.6-1.500-1.500z" fill="#0f63a5" /><path d="M12 6h6" stroke="#1877b8" strokeWidth="1.500" /></Svg>,
  eclipse: <Svg w={36} h={33} vb="0 0 36 33"><path d="M16 0C6 1 0 8 0 16.500S6 32 16 33C8 29 5 23 5 16.500S8 4 16 0z" fill="#f7941e" /><circle cx="19.500" cy="16.500" r="16" fill="#2c2255" /><path d="M4 12h31.500M3.500 16.500H36M4 21h31.500" stroke="#fff" strokeWidth="2" /></Svg>,
  postman: <Svg w={33}><circle cx="16.500" cy="16.500" r="16.500" fill="#ff6c37" /><circle cx="23.500" cy="8.500" r="3" fill="#fff" /><path d="M21 11.500c-3 2-6 4-7 6l2 4c3-1 6-5 7-9z" fill="#fff" /><path d="M15 17l-6 10M17 20l-7 7" stroke="#fff" strokeWidth="1.300" /></Svg>,
  word: <Svg w={36} h={33} vb="0 0 36 33"><path d="M9 1.500C9 .6 9.600 0 10.500 0h24c.9 0 1.500.6 1.500 1.500V8H9z" fill="#41a5ee" /><path d="M9 8h27v8.500H9z" fill="#2b7cd3" /><path d="M9 16.500h27V25H9z" fill="#185abd" /><path d="M9 25h27v6.500c0 .9-.6 1.500-1.500 1.500h-24c-.9 0-1.500-.6-1.500-1.500z" fill="#103f91" /><rect y="7.500" width="19" height="18.500" rx="1.500" fill="#185abd" /><path d="M4 11.500L6.500 22l3-10 3 10L15 11.500" stroke="#fff" strokeWidth="2.200" /></Svg>,
  task: <Svg w={34} h={32} vb="0 0 34 32"><path d="M0 10l7-4v18l-7-4z" fill="#cfcfcf" stroke="#999" /><path d="M2 11v9" stroke="#444" strokeWidth="1.500" /><path d="M9 3l25 2-2 19-24-2z" fill="#e6edf3" stroke="#c5cdd4" strokeWidth="1.500" /><path d="M11 5l21 2-1.500 15L10 20z" fill="#d5e9f6" /><path d="M11 17l3-5 2 4 3-7 2 8 2-4 2 2 2-5 1 7" stroke="#4d93c0" strokeWidth="1" /><path d="M17 23h8v4h7v2c-5 4-14 4-19 0v-2h4z" fill="#c5c5c5" stroke="#eee" /></Svg>,
  npp: <Svg w={34} h={34} vb="0 0 34 34"><path d="M1 3h24l3 28-27 2z" fill="#fafafa" stroke="#555" /><path d="M1 20c9-3 17-4 26-4l1 15-27 2z" fill="#37b522" /><path d="M2 2v3M6 2v3M10 2v3M14 2v3M18 2v3M22 2v3" stroke="#222" strokeWidth="1.500" /><path d="M5 20c2-7 9-8 14-5v7c-5 3-10 3-14 1z" fill="#65cc1b" stroke="#223" /><circle cx="14" cy="12" r="3" fill="#fff" stroke="#222" /><circle cx="19" cy="12" r="3" fill="#fff" stroke="#222" /><circle cx="14.500" cy="12.500" r="1" fill="#111" /><circle cx="19" cy="12.500" r="1" fill="#111" /><path d="M5 25l14 1M14 23v4" stroke="#112" strokeWidth="1.500" /><path d="M33 1L22 25" stroke="#e7a51c" strokeWidth="3" /><path d="M34 0l-2 4" stroke="#c5473c" strokeWidth="3.500" /></Svg>,
  note: <Svg w={33} vb="0 0 33 33"><path d="M30 3l2 28-10 2z" fill="#927950" /><path d="M12 3h18l-5 28-8-2z" fill="#e7f0f2" stroke="#9bb" strokeWidth=".6" /><path d="M11 3l16 2-7 26L1 26z" fill="#7db9cb" /><path d="M11 3l16 2-3 11L6 12z" fill="#b9dfe8" opacity=".7" /><path d="M12 2h18" stroke="#666" strokeWidth="3" strokeDasharray="1 1.200" /></Svg>,
  paint: <Svg w={36} vb="0 0 36 36"><path d="M1 20C1 10 9 5 18 6c9 0 14 6 13 14-1 7-5 12-11 12-5 0-2-6-6-8-4-1-4 4-8 4-4-1-5-4-5-8z" fill="#c9dff3" stroke="#87a9cc" /><circle cx="7" cy="19" r="3.200" fill="#df5947" /><circle cx="12" cy="12.500" r="3.200" fill="#5bb548" /><circle cx="20" cy="10" r="3.400" fill="#f6b22c" /><circle cx="15" cy="21" r="2.500" fill="#fff" stroke="#6a8fb7" /><path d="M30 8L19 35" stroke="#df8230" strokeWidth="2.800" /><path d="M27 10l2-8 6-1-1 8-4 4z" fill="#b79060" /></Svg>,
  snip: <Svg w={36} vb="0 0 36 36"><ellipse cx="13" cy="20" rx="11.500" ry="6" stroke="#e59a9c" strokeWidth="1.300" transform="rotate(-15 13 20)" /><ellipse cx="17" cy="11" rx="15" ry="9.500" fill="#fff" stroke="#e33b44" strokeWidth="2" transform="rotate(-20 17 11)" /><path d="M18 4l4 19M9 12l16 8" stroke="#8d959c" strokeWidth="2" /><ellipse cx="29" cy="22" rx="5" ry="3" stroke="#2285cc" strokeWidth="2.600" transform="rotate(25 29 22)" /><ellipse cx="22" cy="29" rx="3" ry="5.500" stroke="#2285cc" strokeWidth="2.600" transform="rotate(8 22 29)" /></Svg>,
  photos: <Svg w={32} vb="0 0 32 32"><defs><linearGradient id="ph" x1="0" y1="0" x2="1" y2=".8"><stop stopColor="#1489d8" /><stop offset="1" stopColor="#7646a6" /></linearGradient><linearGradient id="ph2" x1="1" y1="0" x2="0" y2="1"><stop stopColor="#1c9ce0" /><stop offset="1" stopColor="#39d3f5" /></linearGradient><clipPath id="pc"><rect width="32" height="32" rx="4" /></clipPath></defs><g clipPath="url(#pc)"><path d="M0 0h32v32H0z" fill="url(#ph)" /><path d="M3 32L15 14c1.500-2 3-2 4.500 0L34 32z" fill="#0e86d3" /><path d="M-2 32L13.500 14c2-2.500 4-2.500 6 0l3 4L8 32z" fill="url(#ph2)" /></g><circle cx="23" cy="6" r="2.800" fill="#f3f3fb" /></Svg>,
};
const appList = [
  ["edge"], ["files", { $run: true, $multi: true }], ["store"], ["m365"], ["chrome", { $on: true }], ["phone"], ["eclipse"], ["postman"],
  ["word", { $run: true }], ["task", { $run: true }], ["npp", { $run: true }], ["note", { $run: true }], ["paint", { $run: true }],
  ["snip", { $run: true }], ["photos", { $run: true }],
];
const Notice = styled.div`padding-top: 3px;`;

function Taskbar() {
  return (
    <Bar>
      <TaskApp $w={72}><Svg w={24}><path d="M0 3.500L10 2v9.500H0zM11 1.800L24 0v11.500H11zM0 12.500h10V22L0 20.500zM11 12.500h13V24l-13-1.800z" fill="#000" /></Svg></TaskApp>
      <TaskApp $w={72}><Svg w={34}><circle cx="19.500" cy="13" r="12" stroke="#000" strokeWidth="2.600" /><path d="M11 21.500L.8 32.500" stroke="#000" strokeWidth="3.600" /></Svg></TaskApp>
      <TaskApp $w={72}><Svg w={24}><path d="M.8 0v3.200h15.400V0M.8 24v-3.200h15.400V24M.8 6.700h15.400v10.600H.8zM22.500 0v6M22.500 11v13" stroke="#000" strokeWidth="1.300" /><path d="M21 7h3v3h-3z" fill="#000" /></Svg></TaskApp>
      <Apps>{appList.map(([k, p]) => <TaskApp key={k} {...p}>{appIcons[k]}</TaskApp>)}</Apps>
      <Item $w={20} $ml={83.500}><Svg w={18} h={10}><path d="M1 9.500l8-8 8 8" stroke="#111" strokeWidth="1.500" /></Svg></Item>
      <Item $w={20} $ml={17}><Svg w={18} h={24}><rect x="1" y="6" width="10" height="12" rx="1.500" stroke="#111" strokeWidth="1.500" /><path d="M11 10.500L16 7v10l-5-3.500M3 2c2-1.400 8-1.400 10 0M3 22c2 1.400 8 1.400 10 0" stroke="#111" strokeWidth="1.400" /></Svg></Item>
      <Item $w={26} $ml={12}><Svg w={26} h={22}><path d="M6 16.500c-7 0-6-8-1-8.500C7-1 17 0 18.500 6c5 0 7 10 1 10.500z" fill="#777" stroke="#333" strokeWidth="1.200" /><path d="M5 16c-5-1-4-7 0-7.500 4 0 8 3 9 7.500z" fill="#e4e4e4" /><circle cx="18" cy="15" r="6.600" fill="#fff" /><path d="M13.800 14a4.300 4.300 0 0 1 7.500-2M22.200 16a4.300 4.300 0 0 1-7.500 2" stroke="#1c7fd2" strokeWidth="1.600" /></Svg></Item>
      <Item $w={18} $ml={13}><Svg w={16} h={24}><rect x="2.500" width="11" height="18" rx="1.500" fill="#000" /><path d="M1 12v5c0 4 14 4 14 0v-5M8 20v3.500M4.500 23.500h7" stroke="#000" strokeWidth="1.300" /></Svg></Item>
      <Item $w={26} $ml={15}><Svg w={25} h={17}><path d="M8 4h15v11.500H5M23 8h1.500v4H23" stroke="#000" strokeWidth="1.300" /><path d="M8.500 5.500H22V14H6.500z" fill="#000" /><path d="M1.500 0v3M6 0v3M.8 3.500h6v3c0 3-6 3-6 0zM3.800 9v6.500" stroke="#000" strokeWidth="1.200" /></Svg></Item>
      <Item $w={20} $ml={14}><Svg w={20}><path d="M1 19C1 8 8 1 19 1" stroke="#555" strokeWidth="1.400" /><path d="M5.500 19C6 11 11 6 19 5.500M10 19c.5-5 4-8.500 9-9" stroke="#222" strokeWidth="1.400" /><path d="M14 19c.3-2.500 2-4.500 5-5" stroke="#111" strokeWidth="1.400" /><circle cx="17.500" cy="17.500" r="1.700" fill="#000" /></Svg></Item>
      <Item $w={24} $ml={13}><Svg w={23} h={19}><path d="M1 6.500h3.500L9 1.500v16l-4.500-5H1z" stroke="#111" strokeWidth="1.300" /><path d="M12 7c1.500 1.500 1.500 3.500 0 5M15 4.500c3 3 3 7 0 10M18.500 2c4 4 4 11 0 15" stroke="#222" strokeWidth="1.300" /></Svg></Item>
      <Item $w={33} $ml={17}><Fit w={33} $s={16}>ENG</Fit></Item>
      <Clock><Fit w={43}>22:19</Fit><Fit w={93}>21-09-2023</Fit></Clock>
      <Item $w={38} $ml={27}>
        <Notice><Svg w={38} h={42}>
          <path d="M0 3h25v19H13v5l-7-5H0z" fill="#000" /><path d="M5 9h15M5 13h15M5 17h9" stroke="#fff" strokeWidth="1.300" />
          <circle cx="24.500" cy="28" r="11.800" fill="#d3d2d4" stroke="#777" /><text x="24.500" y="34" fontSize="17" fontWeight="600" textAnchor="middle" fill="#111" fontFamily="Open Sans">2</text>
        </Svg></Notice>
      </Item>
      <Corner />
    </Bar>
  );
}

const Shell = styled.div`width: 1920px; height: 1080px; overflow: hidden; background: #fff;`;

export default function App() {
  return (
    <>
      <Global />
      <Shell>
        <TabStrip />
        <AddressRow />
        <BookmarkRow />
        <SharingRow />
        <Player />
        <Taskbar />
      </Shell>
    </>
  );
}
